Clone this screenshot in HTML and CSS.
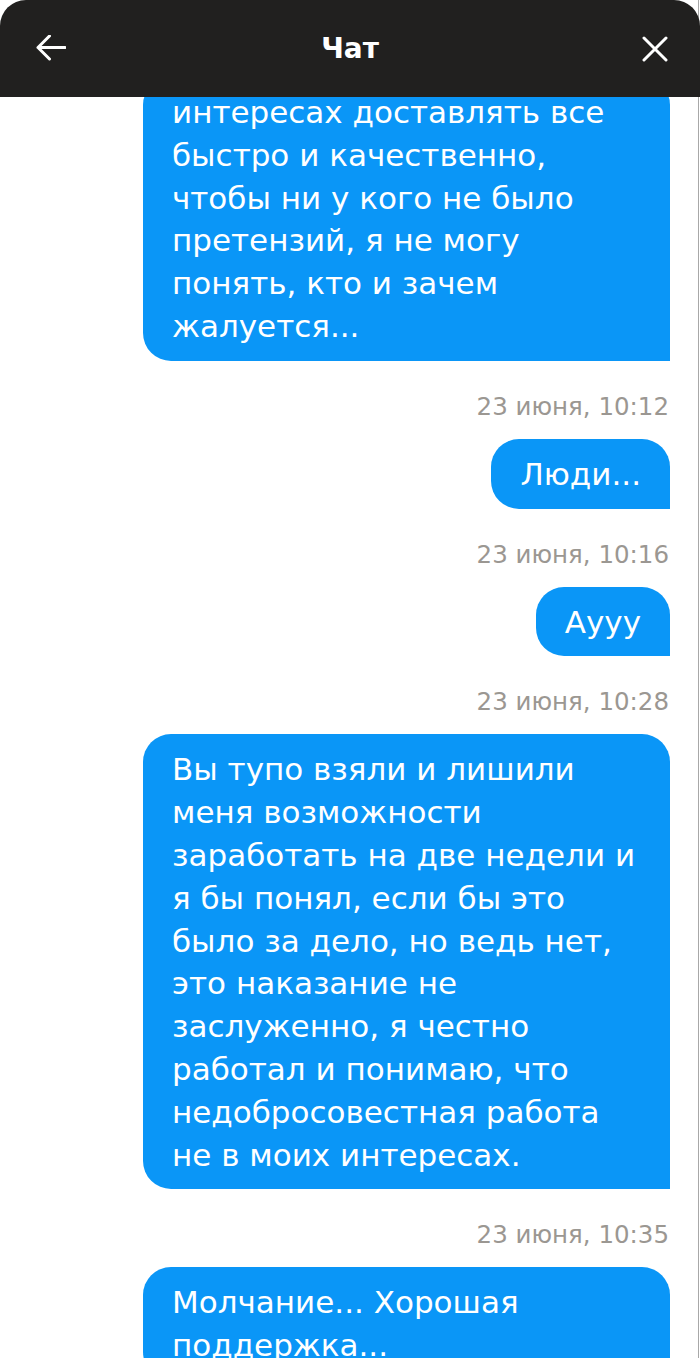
FILE: index.html
```html
<!DOCTYPE html>
<html lang="ru">
<head>
    <meta charset="UTF-8">
    <meta name="viewport" content="width=device-width, initial-scale=1.0">
    <title>Чат</title>
    <link rel="stylesheet" href="styles.css">
</head>
<body>
    <div class="header">
        <button class="icon-btn back">
            <svg width="30" height="28" viewBox="0 0 30 28">
                <path d="M2 12.5 H29 M13.5 1 L2 12.5 L13.5 24" fill="none" stroke="#fff" stroke-width="3" stroke-linecap="round" stroke-linejoin="round"/>
            </svg>
        </button>
        <h1 class="title">Чат</h1>
        <button class="icon-btn close">
            <svg width="26" height="26" viewBox="0 0 26 26">
                <path d="M2 2 L24 24 M24 2 L2 24" fill="none" stroke="#fff" stroke-width="3" stroke-linecap="round"/>
            </svg>
        </button>
    </div>

    <div class="chat">
        <div class="message wide">
            интересах доставлять все<br>
            быстро и качественно,<br>
            чтобы ни у кого не было<br>
            претензий, я не могу<br>
            понять, кто и зачем<br>
            жалуется...
        </div>

        <div class="time">23 июня, 10:12</div>
        <div class="message">Люди...</div>

        <div class="time">23 июня, 10:16</div>
        <div class="message">Аууу</div>

        <div class="time">23 июня, 10:28</div>
        <div class="message wide">
            Вы тупо взяли и лишили<br>
            меня возможности<br>
            заработать на две недели и<br>
            я бы понял, если бы это<br>
            было за дело, но ведь нет,<br>
            это наказание не<br>
            заслуженно, я честно<br>
            работал и понимаю, что<br>
            недобросовестная работа<br>
            не в моих интересах.
        </div>

        <div class="time">23 июня, 10:35</div>
        <div class="message wide">
            Молчание... Хорошая<br>
            поддержка...
        </div>
    </div>
</body>
</html>
```

FILE: styles.css
```css
body {
    font-family: "DejaVu Sans", "Open Sans", sans-serif;
    background-color: #fff;
    margin: 0;
    height: 1358px;
    overflow: hidden;
}

.header {
    position: fixed;
    top: 0;
    left: 0;
    right: 0;
    z-index: 2;
    height: 97px;
    background: #21201f;
    border-radius: 26px 26px 0 0;
    display: flex;
    align-items: center;
    justify-content: space-between;
    padding: 0 29px 0 35px;
}

.title {
    margin: 0 0 0 -6px;
    color: white;
    font-size: 28px;
    font-weight: 700;
}

.icon-btn {
    background: none;
    border: none;
    padding: 0;
    width: 32px;
    height: 32px;
    display: flex;
    align-items: center;
    justify-content: center;
    cursor: pointer;
}

.chat {
    display: flex;
    flex-direction: column;
    align-items: flex-end;
    padding: 77px 28px 0 0;
    border-right: 1px solid #a8a8a8;
    height: 100%;
    margin-right: 1px;
}

.message {
    background: #0a96f7;
    color: white;
    font-size: 31px;
    line-height: 42.8px;
    padding: 14px 29px 13px;
    border-radius: 28px 28px 0 28px;
    max-width: 527px;
    box-sizing: border-box;
}

.message.wide {
    width: 527px;
}

.time {
    color: #9b9792;
    font-size: 24.5px;
    line-height: 30px;
    margin: 31px 1px 17px 0;
}
```
